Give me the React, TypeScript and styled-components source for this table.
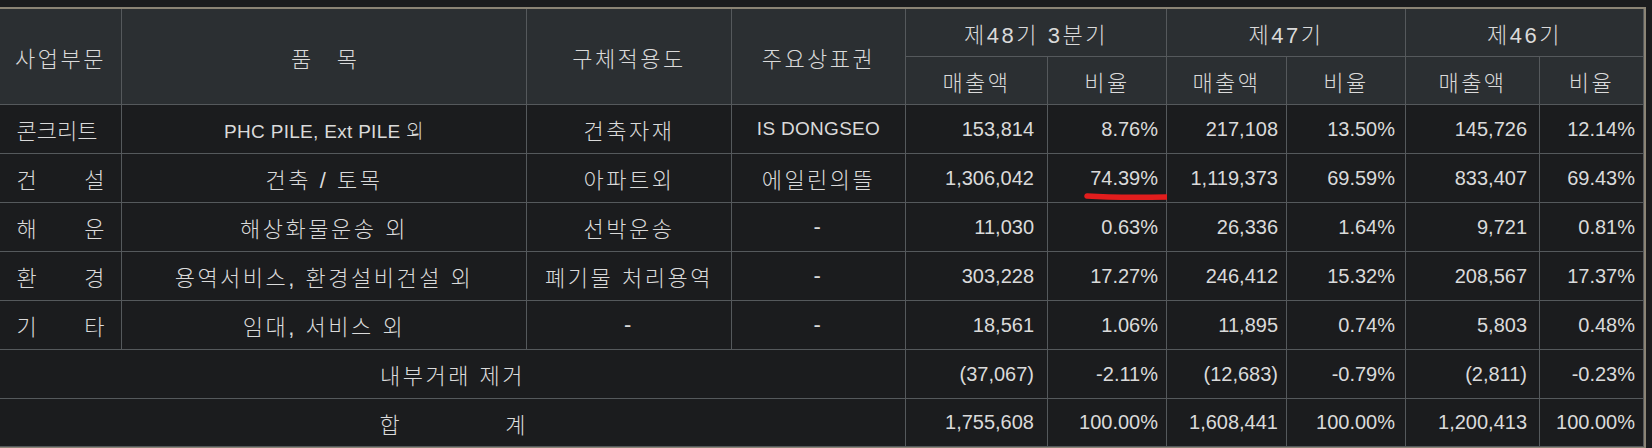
import styled, { createGlobalStyle } from 'styled-components';

const GlobalStyle = createGlobalStyle`
  body {
    margin: 0;
    background: #1b1c1e;
  }
`;

const Page = styled.div`
  padding-top: 7px;
  font-family: "Liberation Sans", "Noto Sans CJK KR", sans-serif;
  font-size: 20px;
  color: #dadada;
`;

const Table = styled.table`
  width: 1646px;
  table-layout: fixed;
  border-collapse: separate;
  border-spacing: 0;
  border-top: 2px solid #8b8475;
  border-right: 2px solid #8b8475;
  border-bottom: 2px solid #8b8475;
`;

const Col = styled.col<{ $w: number }>`
  width: ${(p) => p.$w}px;
`;

const Row = styled.tr<{ $h: number }>`
  height: ${(p) => p.$h}px;
`;

const Head = styled.th`
  background: #2b2f32;
  font-weight: 300;
  font-size: 22px;
  text-align: center;
  letter-spacing: 2.5px;
  padding: 0;
  border-right: 1px solid #55595c;
  border-bottom: 1px solid #55595c;
  white-space: nowrap;
`;

const Cell = styled.td<{ $latin?: boolean }>`
  background: #1b1c1e;
  text-align: center;
  font-weight: 300;
  font-size: ${(p) => (p.$latin ? '19px' : '22px')};
  letter-spacing: ${(p) => (p.$latin ? '0.3px' : '2.5px')};
  padding: 0;
  border-right: 1px solid #55595c;
  border-bottom: 1px solid #55595c;
  white-space: nowrap;
`;

const Num = styled.td<{ $pr: number }>`
  position: relative;
  background: #1b1c1e;
  text-align: right;
  padding: 0 ${(p) => p.$pr}px 0 0;
  border-right: 1px solid #55595c;
  border-bottom: 1px solid #55595c;
  white-space: nowrap;
`;

// 글자를 고정 폭 안에 양끝 정렬 (건   설, 합   계)
const Spread = styled.span<{ $w: number }>`
  display: inline-block;
  width: ${(p) => p.$w}px;
  text-align: justify;
  text-align-last: justify;
  letter-spacing: 0;
`;

const Mark = styled.svg`
  position: absolute;
  left: 36px;
  top: 36px;
  width: 86px;
  height: 12px;
  pointer-events: none;
`;

const widths = [122, 405, 205, 174, 142, 119, 120, 119, 134, 104];
const numPad = [13, 8, 8, 10, 12, 8];

type Line = {
  part: string;
  item: string;
  latin?: boolean;
  use: string;
  brand: string;
  latinBrand?: boolean;
  nums: string[];
};

const lines: Line[] = [
  {
    part: '콘크리트',
    item: 'PHC PILE, Ext PILE 외',
    latin: true,
    use: '건축자재',
    brand: 'IS DONGSEO',
    latinBrand: true,
    nums: ['153,814', '8.76%', '217,108', '13.50%', '145,726', '12.14%'],
  },
  {
    part: '건 설',
    item: '건축 / 토목',
    use: '아파트외',
    brand: '에일린의뜰',
    nums: ['1,306,042', '74.39%', '1,119,373', '69.59%', '833,407', '69.43%'],
  },
  {
    part: '해 운',
    item: '해상화물운송 외',
    use: '선박운송',
    brand: '-',
    nums: ['11,030', '0.63%', '26,336', '1.64%', '9,721', '0.81%'],
  },
  {
    part: '환 경',
    item: '용역서비스, 환경설비건설 외',
    use: '폐기물 처리용역',
    brand: '-',
    nums: ['303,228', '17.27%', '246,412', '15.32%', '208,567', '17.37%'],
  },
  {
    part: '기 타',
    item: '임대, 서비스 외',
    use: '-',
    brand: '-',
    nums: ['18,561', '1.06%', '11,895', '0.74%', '5,803', '0.48%'],
  },
];

const internal = ['(37,067)', '-2.11%', '(12,683)', '-0.79%', '(2,811)', '-0.23%'];
const total = ['1,755,608', '100.00%', '1,608,441', '100.00%', '1,200,413', '100.00%'];

function Numbers({ values, marked }: { values: string[]; marked?: number }) {
  return (
    <>
      {values.map((v, i) => (
        <Num key={i} $pr={numPad[i]}>
          {v}
          {marked === i ? (
            <Mark viewBox="0 0 86 12">
              <path
                d="M3 6 C 25 7.5, 55 7.5, 83 7"
                stroke="#e21d1d"
                strokeWidth="5.5"
                strokeLinecap="round"
                fill="none"
              />
            </Mark>
          ) : null}
        </Num>
      ))}
    </>
  );
}

export default function App() {
  return (
    <Page>
      <GlobalStyle />
      <Table>
        <colgroup>
          {widths.map((w, i) => (
            <Col key={i} $w={w} />
          ))}
        </colgroup>
        <thead>
          <Row $h={48}>
            <Head rowSpan={2}>사업부문</Head>
            <Head rowSpan={2}>
              <Spread $w={66}>품 목</Spread>
            </Head>
            <Head rowSpan={2}>구체적용도</Head>
            <Head rowSpan={2}>주요상표권</Head>
            <Head colSpan={2}>제48기 3분기</Head>
            <Head colSpan={2}>제47기</Head>
            <Head colSpan={2}>제46기</Head>
          </Row>
          <Row $h={48}>
            <Head>매출액</Head>
            <Head>비율</Head>
            <Head>매출액</Head>
            <Head>비율</Head>
            <Head>매출액</Head>
            <Head>비율</Head>
          </Row>
        </thead>
        <tbody>
          {lines.map((l, i) => (
            <Row $h={49} key={i}>
              <Cell>
                <Spread $w={88}>{l.part}</Spread>
              </Cell>
              <Cell $latin={l.latin}>{l.item}</Cell>
              <Cell>{l.use}</Cell>
              <Cell $latin={l.latinBrand}>{l.brand}</Cell>
              <Numbers values={l.nums} marked={i === 1 ? 1 : undefined} />
            </Row>
          ))}
          <Row $h={49}>
            <Cell colSpan={4}>내부거래 제거</Cell>
            <Numbers values={internal} />
          </Row>
          <Row $h={48}>
            <Cell colSpan={4}>
              <Spread $w={146}>합 계</Spread>
            </Cell>
            <Numbers values={total} />
          </Row>
        </tbody>
      </Table>
    </Page>
  );
}
